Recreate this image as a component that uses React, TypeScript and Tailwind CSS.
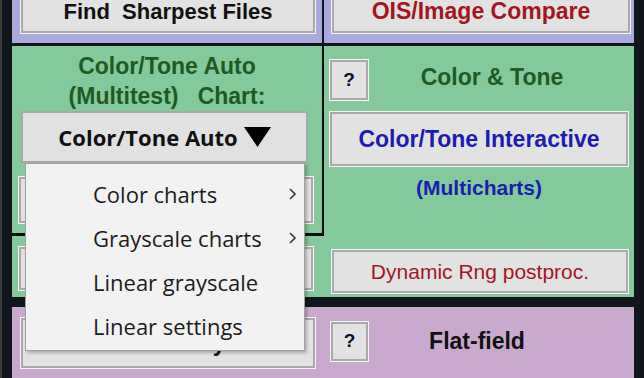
import React from 'react';

const arial = { fontFamily: '"Liberation Sans", Arial, sans-serif' };
const segoe = { fontFamily: '"Open Sans", "Noto Sans", sans-serif' };

const btn =
  'flex items-center justify-center bg-[#e2e2e2] border-2 border-[#a9a9a9] shadow-[0_0_0_1px_#f6f6f6] shrink-0';

const HelpButton = ({ className = '' }: { className?: string }) => (
  <div className={`${btn} ${className} text-[19px] font-bold text-[#101030]`} style={arial}>
    ?
  </div>
);

const Chevron = () => (
  <svg width="9" height="12" viewBox="0 0 9 12" className="text-[#333]">
    <path d="M2 1 L7 6 L2 11" fill="none" stroke="currentColor" strokeWidth="1.6" />
  </svg>
);

const menuItems = [
  { label: 'Color charts', sub: true },
  { label: 'Grayscale charts', sub: true },
  { label: 'Linear grayscale', sub: false },
  { label: 'Linear settings', sub: false },
];

export default function App() {
  return (
    <div className="relative w-[644px] h-[378px] overflow-hidden bg-[#11161d] flex" style={arial}>
      <div className="w-[12px] shrink-0 border-l-2 border-[#3a3a3a]" />

      <div className="w-[622px] flex flex-col shrink-0">
        {/* top purple row */}
        <div className="h-[43px] flex bg-[#a9a9de] shrink-0">
          <div className="w-[310px] pl-[9px]">
            <div className={`${btn} -mt-[10px] w-[294px] h-[43px] text-[22px] font-bold text-[#111] whitespace-pre`}>
              Find  Sharpest Files
            </div>
          </div>
          <div className="w-[2px] bg-[#11161d]" />
          <div className="w-[310px] pl-[8px]">
            <div className={`${btn} -mt-[10px] w-[298px] h-[43px] text-[23px] font-bold text-[#a3161e]`}>
              OIS/Image Compare
            </div>
          </div>
        </div>

        <div className="h-[3px] shrink-0" />

        {/* green section */}
        <div className="h-[251px] flex bg-[#84c99b] shrink-0">
          <div className="w-[312px] flex flex-col">
            <div className="h-[190px] border-r-2 border-b-[3px] border-[#0c0c0c] flex flex-col">
              <div className="pt-[5px] text-center text-[23px] font-bold leading-[30px] text-[#215a21] whitespace-pre">
                <div>Color/Tone Auto</div>
                <div>(Multitest)   Chart:</div>
              </div>
              <div
                className="ml-[9px] w-[287px] h-[52px] flex items-center justify-center gap-[6px] bg-[#e1e1e1] border-2 border-[#a8a8a8] text-[22px] font-bold text-[#111]"
                style={segoe}
              >
                <span>Color/Tone Auto</span>
                <svg width="27" height="20" viewBox="0 0 27 20">
                  <path d="M0 0 H27 L13.5 20 Z" fill="#000" />
                </svg>
              </div>
              <div className={`${btn} mt-[14px] ml-[7px] w-[294px] h-[46px]`} />
            </div>
            <div className="flex-1 pt-[11px]">
              <div className={`${btn} ml-[7px] w-[294px] h-[43px]`} />
            </div>
          </div>

          <div className="w-[310px] flex flex-col pt-[14px]">
            <div className="h-[40px] flex items-center">
              <HelpButton className="ml-[6px] w-[38px] h-[40px]" />
              <div className="flex-1 pr-[18px] text-center text-[23px] font-bold text-[#215a21] -mt-[6px]">
                Color &amp; Tone
              </div>
            </div>
            <div className={`${btn} mt-[12px] ml-[6px] w-[298px] h-[54px] text-[23px] font-bold text-[#1c1cb0]`}>
              Color/Tone Interactive
            </div>
            <div className="h-[44px] flex items-center justify-center text-[21px] font-bold text-[#1c1cb0]">
              (Multicharts)
            </div>
            <div className={`${btn} mt-[40px] ml-[8px] w-[296px] h-[43px] text-[21px] text-[#a3161e]`}>
              Dynamic Rng postproc.
            </div>
          </div>
        </div>

        <div className="h-[10px] shrink-0" />

        {/* bottom purple row */}
        <div className="flex-1 flex bg-[#c9a9cd]">
          <div className="w-[312px] pt-[11px]">
            <div className={`${btn} ml-[9px] w-[294px] h-[50px] text-[23px] font-bold text-[#111]`}>
              Uniformity
            </div>
          </div>
          <div className="w-[310px] pt-[15px] flex items-start">
            <HelpButton className="ml-[7px] w-[37px] h-[39px]" />
            <div className="flex-1 pr-[48px] h-[39px] flex items-center justify-center text-[23px] font-bold text-[#111]">
              Flat-field
            </div>
          </div>
        </div>
      </div>

      <div className="flex-1" />

      {/* open dropdown menu */}
      <div
        className="absolute left-[25px] top-[163px] w-[280px] bg-[#f2f2f2] border border-[#a0a0a0] shadow-[2px_2px_3px_rgba(0,0,0,0.25)] pt-[8px] pb-[2px]"
        style={segoe}
      >
        {menuItems.map((item) => (
          <div key={item.label} className="h-[44px] flex items-center pl-[67px] pr-[7px] text-[22px] text-[#1c1c1c]">
            <span className="flex-1">{item.label}</span>
            {item.sub && <Chevron />}
          </div>
        ))}
      </div>
    </div>
  );
}
